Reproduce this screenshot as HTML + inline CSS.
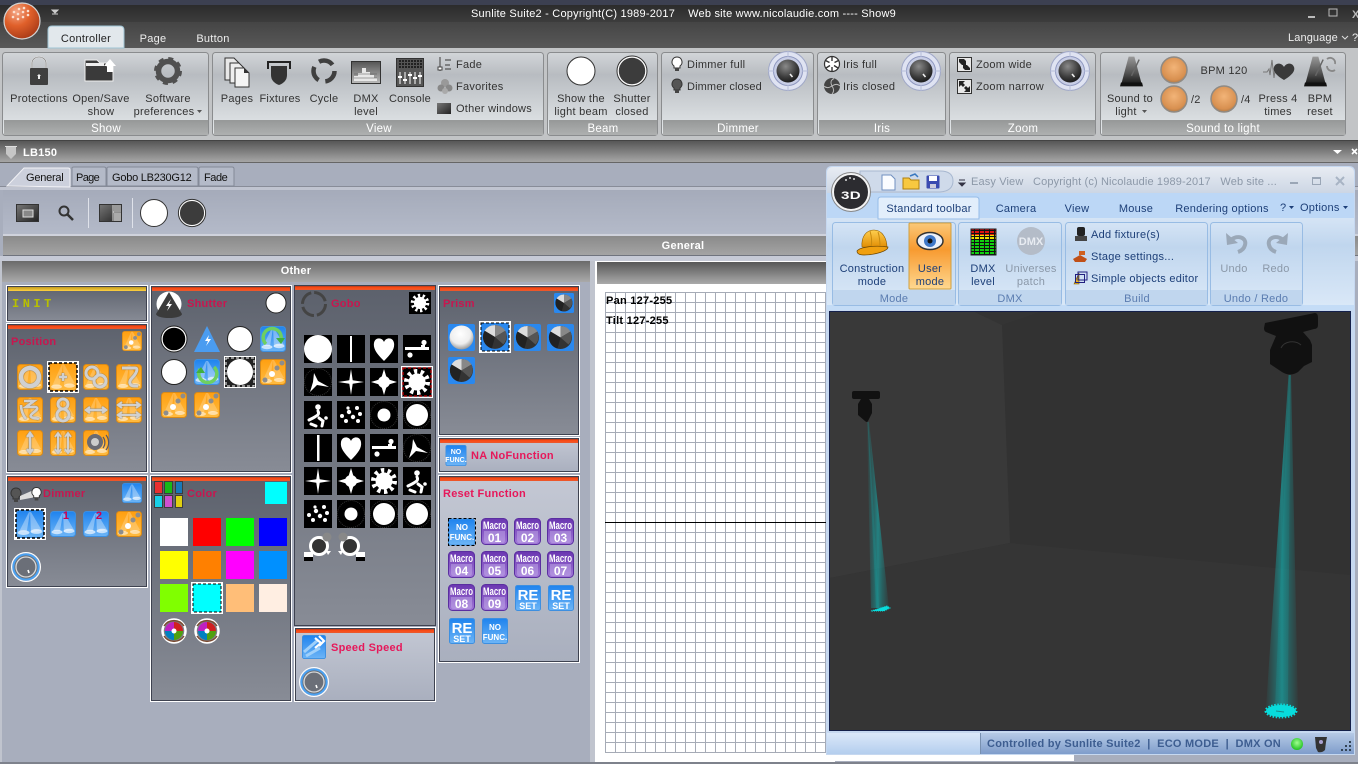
<!DOCTYPE html>
<html><head><meta charset="utf-8"><title>Sunlite Suite2</title>
<style>
html,body{margin:0;padding:0;width:1358px;height:764px;overflow:hidden;background:#a8aebd}
svg{display:block;position:absolute;left:0;top:0}
text{font-family:"Liberation Sans",sans-serif;font-size:11px;letter-spacing:.25px}
.r{fill:#333;text-anchor:middle}.l{fill:#333}
.g{fill:#fff;text-anchor:middle;font-size:11.5px}
.h{fill:#c8164f;font-weight:bold;font-size:11px}
.h2{fill:#e6185a;font-weight:bold;font-size:11px}
.b{fill:#1d3f78;text-anchor:middle}.bl{fill:#1d3f78}
.gr{fill:#8b98a8;text-anchor:middle}
.gl{fill:#5a7cb0;text-anchor:middle}
.bt{fill:#fff;font-weight:bold;text-anchor:middle;font-size:8px;letter-spacing:0}
.mc{fill:#fff;font-weight:bold;text-anchor:middle;font-size:12px;letter-spacing:0}
.o{filter:drop-shadow(0 0 .6px #555)}
</style></head><body>
<svg width="1358" height="764" viewBox="0 0 1358 764" xmlns="http://www.w3.org/2000/svg">
<defs>
<linearGradient id="tb" x1="0" y1="0" x2="0" y2="1"><stop offset="0" stop-color="#2b2b2b"/><stop offset="1" stop-color="#3c3c3c"/></linearGradient>
<linearGradient id="ts" x1="0" y1="0" x2="0" y2="1"><stop offset="0" stop-color="#454545"/><stop offset="1" stop-color="#585858"/></linearGradient>
<linearGradient id="rg" x1="0" y1="0" x2="0" y2="1"><stop offset="0" stop-color="#d2d5d8"/><stop offset=".27" stop-color="#b8bcc1"/><stop offset="1" stop-color="#e6eaec"/></linearGradient>
<linearGradient id="band" x1="0" y1="0" x2="0" y2="1"><stop offset="0" stop-color="#969898"/><stop offset="1" stop-color="#aeb0b0"/></linearGradient>
<linearGradient id="hd" x1="0" y1="0" x2="0" y2="1"><stop offset="0" stop-color="#575757"/><stop offset="1" stop-color="#aaaaaa"/></linearGradient>
<linearGradient id="hd2" x1="0" y1="0" x2="0" y2="1"><stop offset="0" stop-color="#6b6b6b"/><stop offset="1" stop-color="#aaaaaa"/></linearGradient>
<linearGradient id="gb" x1="0" y1="0" x2="0" y2="1"><stop offset="0" stop-color="#8a8a8a"/><stop offset="1" stop-color="#a4a4a4"/></linearGradient>
<linearGradient id="pd" x1="0" y1="0" x2="0" y2="1"><stop offset="0" stop-color="#5c616c"/><stop offset="1" stop-color="#888c96"/></linearGradient>
<linearGradient id="pl" x1="0" y1="0" x2="0" y2="1"><stop offset="0" stop-color="#c4c8d4"/><stop offset="1" stop-color="#a9afbe"/></linearGradient>
<linearGradient id="tool" x1="0" y1="0" x2="0" y2="1"><stop offset="0" stop-color="#a5abba"/><stop offset="1" stop-color="#b4bac9"/></linearGradient>
<linearGradient id="red" x1="0" y1="0" x2="0" y2="1"><stop offset="0" stop-color="#b03a20"/><stop offset=".4" stop-color="#ff4a12"/><stop offset="1" stop-color="#e85a30"/></linearGradient>
<linearGradient id="yel" x1="0" y1="0" x2="0" y2="1"><stop offset="0" stop-color="#c09a20"/><stop offset="1" stop-color="#ffd040"/></linearGradient>
<linearGradient id="og" x1="0" y1="0" x2="0" y2="1"><stop offset="0" stop-color="#ff9f10"/><stop offset="1" stop-color="#ffbb40"/></linearGradient>
<linearGradient id="bg" x1="0" y1="0" x2="0" y2="1"><stop offset="0" stop-color="#1f83ee"/><stop offset="1" stop-color="#6db5f6"/></linearGradient>
<linearGradient id="pg" x1="0" y1="0" x2="0" y2="1"><stop offset="0" stop-color="#6a35b0"/><stop offset="1" stop-color="#a27ad8"/></linearGradient>
<radialGradient id="orb" cx=".35" cy=".25" r=".85"><stop offset="0" stop-color="#f4a888"/><stop offset=".45" stop-color="#e0602a"/><stop offset="1" stop-color="#a03414"/></radialGradient>
<radialGradient id="knob" cx=".4" cy=".3" r=".8"><stop offset="0" stop-color="#8a8a8a"/><stop offset=".6" stop-color="#3a3a3a"/><stop offset="1" stop-color="#111"/></radialGradient>
<radialGradient id="ob" cx=".5" cy=".4" r=".6"><stop offset="0" stop-color="#f2b478"/><stop offset=".8" stop-color="#d89050"/><stop offset="1" stop-color="#b07a48"/></radialGradient>
<radialGradient id="sph" cx=".45" cy=".35" r=".65"><stop offset="0" stop-color="#fff"/><stop offset=".65" stop-color="#eee"/><stop offset="1" stop-color="#999"/></radialGradient>
<radialGradient id="led" cx=".5" cy=".4" r=".6"><stop offset="0" stop-color="#a0ff90"/><stop offset="1" stop-color="#20c020"/></radialGradient>
<linearGradient id="w3" x1="0" y1="0" x2="0" y2="1"><stop offset="0" stop-color="#e8ecf3"/><stop offset="1" stop-color="#ccd6e4"/></linearGradient>
<linearGradient id="rb3" x1="0" y1="0" x2="0" y2="1"><stop offset="0" stop-color="#d5e4f5"/><stop offset=".3" stop-color="#c0d6ee"/><stop offset="1" stop-color="#dbe9f8"/></linearGradient>
<linearGradient id="um" x1="0" y1="0" x2="0" y2="1"><stop offset="0" stop-color="#fbc878"/><stop offset=".4" stop-color="#f79a30"/><stop offset="1" stop-color="#ffd890"/></linearGradient>
<linearGradient id="st1" x1="0" y1="0" x2="0" y2="1"><stop offset="0" stop-color="#dbe8f9"/><stop offset="1" stop-color="#b4ceee"/></linearGradient>
<linearGradient id="st2" x1="0" y1="0" x2="0" y2="1"><stop offset="0" stop-color="#b6cae6"/><stop offset="1" stop-color="#7f9dcb"/></linearGradient>
<linearGradient id="dm" x1="0" y1="0" x2="0" y2="1"><stop offset="0" stop-color="#e01010"/><stop offset=".22" stop-color="#e01010"/><stop offset=".23" stop-color="#f0e000"/><stop offset=".42" stop-color="#f0e000"/><stop offset=".43" stop-color="#10d010"/><stop offset="1" stop-color="#10d010"/></linearGradient>
<linearGradient id="hat" x1="0" y1="0" x2="0" y2="1"><stop offset="0" stop-color="#ffd050"/><stop offset="1" stop-color="#e08a00"/></linearGradient>
<linearGradient id="beam" x1="0" y1="0" x2="1" y2="0"><stop offset="0" stop-color="#16a0a0" stop-opacity=".05"/><stop offset=".3" stop-color="#16a0a0" stop-opacity=".4"/><stop offset=".5" stop-color="#18a8a8" stop-opacity=".65"/><stop offset=".7" stop-color="#16a0a0" stop-opacity=".4"/><stop offset="1" stop-color="#16a0a0" stop-opacity=".05"/></linearGradient>
<linearGradient id="icn" x1="0" y1="0" x2="1" y2="1"><stop offset="0" stop-color="#777"/><stop offset="1" stop-color="#222"/></linearGradient>
<linearGradient id="met" x1="0" y1="0" x2="0" y2="1"><stop offset="0" stop-color="#999"/><stop offset=".55" stop-color="#555"/><stop offset="1" stop-color="#111"/></linearGradient>
<linearGradient id="dmb" x1="0" y1="0" x2="0" y2="1"><stop offset="0" stop-color="#555"/><stop offset="1" stop-color="#bbb"/></linearGradient>
<pattern id="grid" patternUnits="userSpaceOnUse" x="605" y="292" width="10" height="10"><rect width="10" height="10" fill="#fff"/><rect width="10" height="1" fill="#a6abb6"/><rect width="1" height="10" fill="#a6abb6"/></pattern>
<pattern id="dmxp" patternUnits="userSpaceOnUse" width="5" height="3"><rect x="4" width="1" height="3" fill="#111"/><rect y="2" width="5" height="1" fill="#111"/></pattern>
<pattern id="cons" patternUnits="userSpaceOnUse" width="3" height="3"><rect width="3" height="3" fill="#555"/><rect width="2" height="2" fill="#222"/></pattern>

<symbol id="bo" viewBox="0 0 26 26"><rect x=".5" y=".5" width="25" height="25" rx="3" fill="url(#og)" stroke="#d98a18"/><path d="M12 1L3 21h7L13 1zM14 1l10 18-10 2-1-20z" fill="#fff" opacity=".22"/><ellipse cx="7" cy="22" rx="5" ry="2" fill="#fff" opacity=".55"/><ellipse cx="19" cy="21" rx="5" ry="2" fill="#fff" opacity=".55"/></symbol>
<symbol id="bb" viewBox="0 0 26 26"><rect x=".5" y=".5" width="25" height="25" rx="3" fill="url(#bg)" stroke="#3d8fe0"/><path d="M12 2L3 20h7L13 2zM14 2l10 17-10 2-1-19z" fill="#fff" opacity=".35"/><ellipse cx="7" cy="21" rx="5.500" ry="2.200" fill="#fff" opacity=".65"/><ellipse cx="19" cy="20" rx="5.500" ry="2.200" fill="#fff" opacity=".65"/></symbol>
<symbol id="spot" viewBox="0 0 26 26"><g fill="#8d8d8d"><circle cx="22" cy="4" r="2.500"/><circle cx="17" cy="9" r="2.500"/><circle cx="5" cy="21" r="2.500"/></g><circle cx="12" cy="15" r="3" fill="#fff"/></symbol>
<symbol id="cw" viewBox="0 0 26 26"><circle cx="13" cy="13" r="11.500" fill="none" stroke="#fff" stroke-width="2.500"/><path d="M13 4a9 9 0 0 1 9 9h-9z" fill="#d02020"/><path d="M22 13a9 9 0 0 1-9 9v-9z" fill="#50a010"/><path d="M13 22a9 9 0 0 1-9-9h9z" fill="#0080c0"/><path d="M4 13a9 9 0 0 1 9-9v9z" fill="#c020c0"/><circle cx="13" cy="13" r="2.500" fill="#fff"/><path d="M3 8a12 12 0 0 1 20 0M23 18a12 12 0 0 1-20 0" fill="none" stroke="#7a4a30" stroke-width="1.400"/></symbol>
<symbol id="kn" viewBox="0 0 40 40"><circle cx="20" cy="20" r="19.500" fill="#dfe3f2" stroke="#a0a8c8"/><circle cx="20" cy="20" r="14.500" fill="#c8cee6" stroke="#8f98c0"/><path d="M20 0v6M20 34v6M0 20h6M34 20h6" stroke="#b4bcd8"/><circle cx="20" cy="20" r="11.500" fill="url(#knob)"/><path d="M22 23l2.500 3" stroke="#eee" stroke-width="1.600"/></symbol>
<symbol id="kb" viewBox="0 0 30 30"><circle cx="15" cy="15" r="14.500" fill="#c2c8d8" stroke="#fff"/><circle cx="15" cy="15" r="12.600" fill="#6b7078" stroke="#4aa0f0" stroke-width="2"/><circle cx="15" cy="15" r="10" fill="#6b6f78" stroke="#d8d8d8" stroke-width="1.300"/><path d="M17 18l1 3" stroke="#fff" stroke-width="1.600"/></symbol>
<symbol id="bulb" viewBox="0 0 14 16"><path d="M7 1a5 5 0 0 0-3 9v2h6v-2a5 5 0 0 0-3-9z" fill="currentColor" stroke="#333"/><rect x="5" y="12" width="4" height="3" fill="#444"/></symbol>
<symbol id="bur" viewBox="0 0 28 28"><circle cx="14" cy="14" r="8.500" fill="#fff"/><circle cx="14" cy="14" r="10.500" fill="none" stroke="#fff" stroke-width="5" stroke-dasharray="3.200 3.400"/></symbol>
<symbol id="hrt" viewBox="0 0 28 28"><path d="M14 26C7 19 3 14 4 8C5 2 12 2 14 7C16 2 23 2 24 8C25 14 21 19 14 26Z" fill="#fff"/></symbol>
<symbol id="lin" viewBox="0 0 28 28"><rect x="2" y="12" width="24" height="3" fill="#fff"/><circle cx="21" cy="7.500" r="2.600" fill="#fff"/><circle cx="7" cy="20" r="2.600" fill="#fff"/><rect x="18" y="10" width="4" height="3" fill="#fff"/></symbol>
<symbol id="tri" viewBox="0 0 28 28"><circle cx="14" cy="14" r="13.500" fill="none" stroke="#333" stroke-dasharray="1 1"/><path d="M10 5L14 13L25 19L13 17L6 24L9 14Z" fill="#fff"/></symbol>
<symbol id="s4" viewBox="0 0 28 28"><path d="M14 1L15.700 12.300L27 14L15.700 15.700L14 27L12.300 15.700L1 14L12.300 12.300Z" fill="#fff"/></symbol>
<symbol id="s5" viewBox="0 0 28 28"><path d="M14 1L17 11L27 14L17 17L14 27L11 17L1 14L11 11Z" fill="#fff"/><circle cx="14" cy="14" r="6" fill="#fff"/></symbol>
<symbol id="run" viewBox="0 0 28 28"><g fill="none" stroke="#fff" stroke-width="3" stroke-linecap="round"><path d="M14 10C16 14 12 15 9 17M9 17L5 19M15 17L19 20L18 25M7 23L12 25"/></g><circle cx="14" cy="6" r="2.800" fill="#fff"/><circle cx="22" cy="17" r="1.800" fill="#fff"/></symbol>
<symbol id="dts" viewBox="0 0 28 28"><g fill="#fff"><circle cx="5" cy="15" r="2"/><circle cx="12" cy="11" r="2.200"/><circle cx="20" cy="7" r="2"/><circle cx="9" cy="20" r="2"/><circle cx="16" cy="16" r="2.200"/><circle cx="23" cy="13" r="2"/><circle cx="11" cy="7" r="1.600"/><circle cx="21" cy="20" r="2"/></g></symbol>
<symbol id="cs" viewBox="0 0 28 28"><circle cx="14" cy="14" r="13.500" fill="none" stroke="#333" stroke-dasharray="1 1"/><circle cx="14" cy="14" r="6.500" fill="#fff"/></symbol>
<symbol id="cb" viewBox="0 0 28 28"><circle cx="14" cy="14" r="13.500" fill="none" stroke="#333" stroke-dasharray="1 1"/><circle cx="14" cy="14" r="11" fill="#fff"/></symbol>
<symbol id="pb" viewBox="0 0 27 27"><rect width="27" height="27" rx="2" fill="#2a88ee"/><circle cx="13.500" cy="13.500" r="11.500" fill="#333"/><path d="M13.500 2a11.500 11.500 0 0 0-10 5.500l10 6z" fill="#ddd"/><path d="M13.500 2a11.500 11.500 0 0 1 10 5.500l-10 6z" fill="#888"/><path d="M23.500 7.500a11.500 11.500 0 0 1-2 13l-8-7z" fill="#555"/><path d="M13.500 13.500l-3 11a11.500 11.500 0 0 1-7-17z" fill="#222"/></symbol>
<symbol id="mac" viewBox="0 0 27 27"><rect x=".5" y=".5" width="26" height="26" rx="4" fill="url(#pg)" stroke="#5a2ea0"/><path d="M3 13H24V22Q24 25 21 25H6Q3 25 3 22Z" fill="#c8b4ea" opacity=".45"/></symbol>
<symbol id="bbx" viewBox="0 0 26 26"><rect x=".5" y=".5" width="25" height="25" rx="2" fill="url(#bg)" stroke="#3d8fe0"/></symbol>
<symbol id="meta" viewBox="0 0 24 32"><path d="M9 0h6l8 30H1z" fill="url(#met)"/><path d="M1 27h22l1 4H0z" fill="#111"/><path d="M12 20L20 3" stroke="#666" stroke-width="1.500"/></symbol>
</defs>

<rect width="1358" height="764" fill="#a8aebd"/>
<rect width="1358" height="5" fill="#3c4051"/>
<rect y="5" width="1358" height="17" fill="url(#tb)"/>
<rect y="22" width="1358" height="26" fill="url(#ts)"/>
<rect y="48" width="1358" height="92" fill="#c2c4c6"/>
<text x="471" y="17" fill="#fff" font-size="12" textLength="425" lengthAdjust="spacing" xml:space="preserve">Sunlite Suite2 - Copyright(C) 1989-2017    Web site www.nicolaudie.com ---- Show9</text>
<path d="M48 48V30Q48 26 52 26H120Q124 26 124 30V48Z" fill="#e2e8ec" stroke="#9fc4d4"/>
<circle cx="22" cy="21" r="18" fill="url(#orb)" stroke="#d4d4d4" stroke-width="1.200"/>
<g fill="#fbe0d0"><circle cx="14" cy="12" r="1.300"/><circle cx="19" cy="9" r="1.300"/><circle cx="24" cy="8" r="1.300"/><circle cx="13" cy="17" r="1.300"/><circle cx="18" cy="14" r="1.300"/><circle cx="23" cy="12" r="1.300"/><circle cx="28" cy="11" r="1.300"/><circle cx="18" cy="19" r="1.300"/><circle cx="23" cy="17" r="1.300"/><circle cx="28" cy="15" r="1.300"/></g>
<path d="M52 14h6M52 10h6l-3 3z" stroke="#ccc" fill="#ccc"/>
<rect x="1308" y="16" width="7" height="2" fill="#bbb"/><rect x="1329" y="9" width="8" height="7" fill="none" stroke="#bbb"/><text x="1352" y="18" fill="#bbb" font-weight="bold" font-size="12">X</text>
<text x="86" y="42" text-anchor="middle" fill="#222">Controller</text>
<text x="153" y="42" text-anchor="middle" fill="#eee">Page</text>
<text x="213" y="42" text-anchor="middle" fill="#eee">Button</text>
<text x="1288" y="41" fill="#eee" textLength="50">Language</text><path d="M1342 36l3 3 3-3" fill="none" stroke="#ddd"/><text x="1352" y="41" fill="#eee">?</text>
<g stroke="#8a8c8e" fill="url(#rg)">
<rect x="2.500" y="52.500" width="206" height="83" rx="3"/>
<rect x="212.500" y="52.500" width="331" height="83" rx="3"/>
<rect x="547.500" y="52.500" width="110" height="83" rx="3"/>
<rect x="661.500" y="52.500" width="152" height="83" rx="3"/>
<rect x="817.500" y="52.500" width="128" height="83" rx="3"/>
<rect x="949.500" y="52.500" width="146" height="83" rx="3"/>
<rect x="1100.500" y="52.500" width="245" height="83" rx="3"/>
</g>
<g fill="url(#band)">
<rect x="4" y="120" width="204" height="15"/><rect x="214" y="120" width="329" height="15"/><rect x="549" y="120" width="108" height="15"/><rect x="663" y="120" width="150" height="15"/><rect x="819" y="120" width="126" height="15"/><rect x="951" y="120" width="144" height="15"/><rect x="1102" y="120" width="243" height="15"/>
</g>
<text class="g" x="106" y="132">Show</text><text class="g" x="379" y="132">View</text><text class="g" x="603" y="132">Beam</text><text class="g" x="738" y="132">Dimmer</text><text class="g" x="882" y="132">Iris</text><text class="g" x="1023" y="132">Zoom</text><text class="g" x="1223" y="132">Sound to light</text>

<text class="r" x="39" y="102">Protections</text>
<text class="r" x="101" y="102">Open/Save</text><text class="r" x="101" y="115">show</text>
<text class="r" x="168" y="102">Software</text><text class="r" x="164" y="115">preferences</text><path d="M197 110h5l-2.500 3z" fill="#555"/>
<text class="r" x="237" y="102">Pages</text><text class="r" x="280" y="102">Fixtures</text><text class="r" x="324" y="102">Cycle</text>
<text class="r" x="366" y="102">DMX</text><text class="r" x="366" y="115">level</text><text class="r" x="410" y="102">Console</text>
<text class="l" x="456" y="68">Fade</text><text class="l" x="456" y="90">Favorites</text><text class="l" x="456" y="112">Other windows</text>
<text class="r" x="581" y="102">Show the</text><text class="r" x="581" y="115">light beam</text><text class="r" x="632" y="102">Shutter</text><text class="r" x="632" y="115">closed</text>
<text class="l" x="687" y="68">Dimmer full</text><text class="l" x="687" y="90" textLength="75">Dimmer closed</text>
<text class="l" x="843" y="68">Iris full</text><text class="l" x="843" y="90">Iris closed</text>
<text class="l" x="976" y="68">Zoom wide</text><text class="l" x="976" y="90" textLength="68">Zoom narrow</text>
<text class="r" x="1130" y="102">Sound to</text><text class="r" x="1126" y="115">light</text><path d="M1142 110h5l-2.500 3z" fill="#555"/>
<text class="r" x="1224" y="74">BPM 120</text><text class="l" x="1191" y="103">/2</text><text class="l" x="1241" y="103">/4</text>
<text class="r" x="1278" y="102">Press 4</text><text class="r" x="1278" y="115">times</text><text class="r" x="1320" y="102">BPM</text><text class="r" x="1320" y="115">reset</text>

<path d="M32 68V63a7 6 0 0 1 14 0V68" fill="none" stroke="#ddd" stroke-width="1.800"/><path d="M32 68V63a7 6 0 0 1 14 0V68" fill="none" stroke="#777" stroke-width=".6"/>
<rect x="30" y="68" width="18" height="17" rx="1" fill="#3f3f3f"/><path d="M39 74l2 2h-1v3h-2v-3h-1z" fill="#eee"/>
<path d="M85 60h12l3 3h7v3h6v15H85z" fill="#3a3a3a" stroke="#eee"/><path d="M110 59l6 7h-3v6h-6v-6h-3z" fill="#fff"/><rect x="86" y="63" width="18" height="3" fill="#eee"/>
<circle cx="168" cy="71" r="9.500" fill="none" stroke="#505050" stroke-width="5.500"/><circle cx="168" cy="71" r="12.500" fill="none" stroke="#505050" stroke-width="3" stroke-dasharray="5 4.800"/>
<path d="M225 58h9l5 5v17h-14z" fill="#e8e8e8" stroke="#333"/><path d="M230 63h9l5 5v15h-14z" fill="#eee" stroke="#333"/><path d="M235 68h9l5 5v14h-14z" fill="#f4f4f4" stroke="#333"/><path d="M244 68v5h5z" fill="#333"/>
<path d="M267 61h24v8h-2v-6h-20v6h-2z" fill="#222"/><path d="M271 66h16v9q0 7-8 10q-8-3-8-10z" fill="#333"/>
<circle cx="324" cy="71" r="10.500" fill="none" stroke="#3f3f3f" stroke-width="4.500" stroke-dasharray="15 7"/>
<rect x="351.500" y="61.500" width="29" height="22" fill="url(#dmb)" stroke="#333"/><path d="M354 81v-5h4v-3h4v-5h4v4h4v3h4v3h3v3z" fill="#e8e8e8"/><path d="M354 74h23M354 78h23" stroke="#555" stroke-width=".6"/>
<rect x="396.500" y="58.500" width="27" height="28" fill="#555" stroke="#333"/><rect x="398" y="60" width="24" height="9" fill="url(#cons)"/><path d="M400 72v12M405 72v12M410 72v12M415 72v12M420 72v12" stroke="#fff" stroke-width="1"/><path d="M398 77h4M403 80h4M408 75h4M413 78h4M418 76h4" stroke="#fff" stroke-width="2"/>
<path d="M440 57v14M445 60h6M445 65h5M445 69h6" stroke="#555" stroke-width="1.200" fill="none"/><rect x="438" y="67" width="4" height="3" fill="#fff" stroke="#444"/>
<circle cx="445" cy="83" r="4" fill="#999"/><circle cx="441" cy="88" r="3.500" fill="#888"/><circle cx="449" cy="88" r="3.500" fill="#888"/><circle cx="445" cy="91" r="3" fill="#aaa"/>
<rect x="437" y="103" width="14" height="11" fill="url(#icn)"/>
<circle cx="581" cy="71" r="14" fill="#fff" stroke="#333"/>
<circle cx="632" cy="71" r="14" fill="#3c3c3c" stroke="#fff" stroke-width="1.600"/><circle cx="632" cy="71" r="15" fill="none" stroke="#333"/>
<use href="#bulb" x="670" y="56" width="14" height="16" color="#fff"/><use href="#bulb" x="670" y="78" width="14" height="16" color="#555"/>
<use href="#kn" x="768" y="51" width="40" height="40"/><use href="#kn" x="901" y="51" width="40" height="40"/><use href="#kn" x="1050" y="51" width="40" height="40"/>
<circle cx="832" cy="64" r="7.500" fill="#fff" stroke="#333" stroke-width="1.200"/><path d="M832 57v4M838.500 60.500l-4 2M838 68l-4-2.500M832 71v-4M826 68l4-2.500M825.500 60.500l4 2" stroke="#333" stroke-width="1.400"/>
<circle cx="832" cy="86" r="8" fill="#444"/><path d="M832 86C830 82 831 80 834 78.500M832 86C835 84 838 84 840 86M832 86C834 89 834 92 832 94M832 86C829 88 826 88 824 86" fill="none" stroke="#bbb"/>
<rect x="957.500" y="57.500" width="14" height="14" fill="#e8e8e8" stroke="#333"/><path d="M959 59h5l2 2v4h-4l-3-3zM970 70h-5l-2-2v-3h4l3 3z" fill="#222"/>
<rect x="957.500" y="79.500" width="14" height="14" fill="#e8e8e8" stroke="#333"/><path d="M959 81h6l-2 2 2 2-2 2-2-2-2 2zM970 92h-6l2-2-2-2 2-2 2 2 2-2z" fill="#222"/>
<use href="#meta" x="1120" y="56" width="23" height="32"/>
<circle cx="1174" cy="70" r="13" fill="url(#ob)" stroke="#8f8a84" stroke-width="1.500"/><circle cx="1174" cy="99" r="13" fill="url(#ob)" stroke="#8f8a84" stroke-width="1.500"/><circle cx="1224" cy="99" r="13" fill="url(#ob)" stroke="#8f8a84" stroke-width="1.500"/>
<path d="M1263 72h4l2-3 1 6 2-15 2 18 1-8h3" fill="none" stroke="#777"/><path d="M1284 80C1274 74 1273 70 1274 67C1276 62 1282 63 1284 67C1286 63 1292 62 1294 67C1295 70 1294 74 1284 80Z" fill="#3a3a3a"/>
<use href="#meta" x="1304" y="56" width="23" height="32"/><path d="M1327 59a5 5 0 0 1 8 5M1335 70a5 5 0 0 1-8-4" fill="none" stroke="#888" stroke-width="1.800"/>

<rect y="140" width="1358" height="1" fill="#444"/>
<rect y="141" width="1358" height="22" fill="url(#hd)"/>
<rect y="162" width="1358" height="1" fill="#666"/>
<path d="M6 146h10v8l-5 5-5-5z" fill="#c6c6c6"/><rect x="5" y="146" width="12" height="1" fill="#ddd"/>
<text x="23" y="156" fill="#fff" font-weight="bold" font-size="11">LB150</text>
<path d="M1333 150h9l-4.500 4z" fill="#fff"/><path d="M1352 149l5 5M1357 149l-5 5" stroke="#fff" stroke-width="1.600"/>

<rect y="186" width="1358" height="1" fill="#888c98"/>
<rect x="0" y="187" width="1358" height="3" fill="#c0c4d0"/>
<path d="M72 186V168q0-1 2-1H104q2 0 2 2V186z" fill="#b4bac8" stroke="#848a98"/>
<path d="M107 186V168q0-1 2-1H196q2 0 2 2V186z" fill="#b4bac8" stroke="#848a98"/>
<path d="M199 186V168q0-1 2-1H232q2 0 2 2V186z" fill="#b4bac8" stroke="#848a98"/>
<path d="M7 186L24 168H68q2 0 2 2V187z" fill="#ccd0dc" stroke="#f2f2f6"/>
<text x="26" y="181" fill="#111" textLength="38">General</text><text x="76" y="181" fill="#111" textLength="24">Page</text><text x="112" y="181" fill="#111" textLength="80">Gobo LB230G12</text><text x="204" y="181" fill="#111" textLength="24">Fade</text>

<rect x="3" y="190" width="1360" height="45" fill="url(#tool)"/><rect x="3" y="234" width="1360" height="2" fill="#cfd2dc"/>
<rect x="3" y="236" width="1360" height="19" fill="url(#gb)"/><rect x="3" y="255" width="1360" height="1" fill="#70747e"/>
<rect x="0" y="256" width="1358" height="5" fill="#c6cad6"/>
<rect x="16.500" y="204.500" width="22" height="17" fill="url(#icn)" stroke="#333"/><rect x="23" y="210" width="10" height="7" fill="#888" stroke="#ddd"/>
<circle cx="64" cy="211" r="4.500" fill="none" stroke="#333" stroke-width="2"/><path d="M67 214l6 6" stroke="#333" stroke-width="2.500"/>
<rect x="88" y="198" width="1" height="30" fill="#dfe2ea"/>
<rect x="99.500" y="204.500" width="22" height="17" fill="url(#icn)" stroke="#333"/><path d="M113 205v16M113 212h8" stroke="#ddd" fill="none"/><rect x="114" y="205" width="7" height="7" fill="#999"/><rect x="114" y="213" width="7" height="8" fill="#aaa"/>
<rect x="132" y="198" width="1" height="30" fill="#dfe2ea"/>
<circle cx="154" cy="213" r="13.500" fill="#fff" stroke="#333"/>
<circle cx="192" cy="213" r="12.800" fill="#3c3c3c" stroke="#fff" stroke-width="1.500"/><circle cx="192" cy="213" r="13.600" fill="none" stroke="#333"/>
<text x="683" y="249" fill="#fff" font-weight="bold" text-anchor="middle">General</text>

<rect x="2" y="261" width="588" height="21" fill="url(#hd2)"/>
<text x="296" y="274" fill="#fff" font-weight="bold" text-anchor="middle">Other</text>
<rect x="590" y="261" width="5" height="503" fill="#c0c4ce"/>
<rect x="0" y="261" width="2" height="503" fill="#c0c4ce"/>
<rect x="2" y="282" width="588" height="480" fill="#a8aebd"/>
<rect y="762" width="1358" height="2" fill="#7e828c"/>

<g stroke="#fff">
<rect x="6.500" y="285.500" width="141" height="36" fill="url(#pd)"/>
<rect x="6.500" y="323.500" width="141" height="149" fill="url(#pd)"/>
<rect x="150.500" y="285.500" width="141" height="187" fill="url(#pd)"/>
<rect x="6.500" y="475.500" width="141" height="112" fill="url(#pd)"/>
<rect x="150.500" y="475.500" width="141" height="226" fill="url(#pd)"/>
<rect x="294.500" y="285.500" width="141" height="340" fill="url(#pd)" stroke="#3e4250"/>
<rect x="294.500" y="627.500" width="141" height="74" fill="url(#pl)"/>
<rect x="438.500" y="285.500" width="141" height="150" fill="url(#pd)"/>
<rect x="438.500" y="437.500" width="141" height="35" fill="url(#pl)"/>
<rect x="438.500" y="475.500" width="141" height="187" fill="url(#pl)"/>
</g>
<g stroke="#3e4250" fill="none">
<rect x="7.500" y="286.500" width="139" height="34"/>
<rect x="7.500" y="324.500" width="139" height="147"/>
<rect x="151.500" y="286.500" width="139" height="185"/>
<rect x="7.500" y="476.500" width="139" height="110"/>
<rect x="151.500" y="476.500" width="139" height="224"/>
<rect x="295.500" y="628.500" width="139" height="72"/>
<rect x="439.500" y="286.500" width="139" height="148"/>
<rect x="439.500" y="438.500" width="139" height="33"/>
<rect x="439.500" y="476.500" width="139" height="185"/>
</g>
<g fill="url(#red)">
<rect x="8" y="325" width="138" height="4"/><rect x="152" y="287" width="138" height="4"/><rect x="8" y="477" width="138" height="4"/><rect x="152" y="477" width="138" height="4"/><rect x="295" y="286" width="140" height="4"/><rect x="296" y="629" width="138" height="4"/><rect x="440" y="287" width="138" height="4"/><rect x="440" y="439" width="138" height="4"/><rect x="440" y="477" width="138" height="4"/>
</g>
<rect x="8" y="287" width="138" height="4" fill="url(#yel)"/>

<text x="12" y="307" fill="#b8c000" font-weight="bold" style="letter-spacing:3.500px;font-size:12px;font-family:'Liberation Mono',monospace">INIT</text>
<text class="h" x="11" y="345">Position</text><text class="h" x="187" y="307">Shutter</text><text class="h" x="43" y="497">Dimmer</text><text class="h" x="187" y="497">Color</text><text class="h" x="331" y="307">Gobo</text><text class="h" x="443" y="307">Prism</text>
<text class="h2" x="471" y="459">NA NoFunction</text><text class="h2" x="443" y="497">Reset Function</text><text class="h2" x="331" y="651">Speed Speed</text>

<use href="#bo" x="122" y="331" width="20" height="20"/><use href="#spot" x="122" y="331" width="20" height="20"/>
<use href="#bo" x="17" y="364" width="26" height="26"/>
<rect x="47.500" y="361.500" width="31" height="31" fill="#fff" stroke="#fff"/><use href="#bo" x="49" y="363" width="28" height="28"/><rect x="49" y="363" width="28" height="28" fill="none" stroke="#000" stroke-width="1.500" stroke-dasharray="3 2"/>
<use href="#bo" x="83" y="364" width="26" height="26"/><use href="#bo" x="116" y="364" width="26" height="26"/>
<use href="#bo" x="17" y="397" width="26" height="26"/><use href="#bo" x="50" y="397" width="26" height="26"/><use href="#bo" x="83" y="397" width="26" height="26"/><use href="#bo" x="116" y="397" width="26" height="26"/>
<use href="#bo" x="17" y="430" width="26" height="26"/><use href="#bo" x="50" y="430" width="26" height="26"/><use href="#bo" x="83" y="430" width="26" height="26"/>
<g class="o" fill="none" stroke="#d0d0d0">
<circle cx="30" cy="377" r="9" stroke-width="4.500"/>
<path d="M63 373v8M59 377h8" stroke-width="2.500"/>
<circle cx="92" cy="373" r="6" stroke-width="3"/><circle cx="100" cy="381" r="6" stroke-width="3"/>
<path d="M122 368h13c4 0 1 6-3 10s-2 8 2 8h4" stroke-width="3"/>
<path d="M24 401h10l-8 6h10c4 2-3 5-5 8s5 3 8 4M21 405c0 5 1 9 5 14" stroke-width="2.600"/>
<circle cx="63" cy="404" r="5" stroke-width="3"/><circle cx="63" cy="415" r="6" stroke-width="3"/>
<path d="M86 410h20M90 407l-4 3 4 3M102 407l4 3-4 3" stroke-width="2.400"/>
<path d="M118 405h22M118 415h22M122 402l-4 3 4 3M136 412l4 3-4 3M136 402l4 3-4 3M122 412l-4 3 4 3" stroke-width="2.200"/>
<path d="M30 433v20M27 437l3-4 3 4M27 449l3 4 3-4" stroke-width="2.400"/>
<path d="M58 433v20M68 433v20M55 437l3-4 3 4M55 449l3 4 3-4M65 437l3-4 3 4M65 449l3 4 3-4" stroke-width="2"/>
</g>
<circle cx="95" cy="442" r="8" fill="#6a6a72"/><circle cx="95" cy="442" r="4" fill="#ccc"/><path d="M103 437a9 9 0 0 1 0 11M106 435a12 12 0 0 1 0 15" fill="none" stroke="#556" stroke-width="1.200"/>

<circle cx="169" cy="304" r="12.500" fill="#fff"/><path d="M169 292l13 22a13 4 0 0 1-26 0z" fill="#3b3b3b"/><path d="M171 299l-5 7h3l-2 5 5-7h-3z" fill="#fff"/>
<circle cx="276" cy="303" r="10" fill="#fff" stroke="#222"/>
<circle cx="174" cy="339" r="12" fill="#000" stroke="#fff" stroke-width="1.400"/><circle cx="174" cy="339" r="13" fill="none" stroke="#222"/>
<path d="M207 326l13 26h-26z" fill="#4a9cf0"/><path d="M209 335l-4 6h3l-2 5 5-7h-3z" fill="#fff"/>
<circle cx="240" cy="339" r="12.500" fill="#fff" stroke="#222"/>
<use href="#bb" x="260" y="326" width="26" height="26"/><path d="M266 344a9 9 0 1 1 14-2" fill="none" stroke="#6ecf60" stroke-width="3.500"/><path d="M276 338h9l-4 6z" fill="#40b040"/>
<circle cx="174" cy="372" r="12.500" fill="#fff" stroke="#222"/>
<use href="#bb" x="194" y="359" width="26" height="26"/><path d="M214 367a9 9 0 1 1-14 2" fill="none" stroke="#6ecf60" stroke-width="3.500"/><path d="M196 373h9l-4-6z" fill="#40b040"/>
<rect x="224.500" y="356.500" width="31" height="31" fill="#222" stroke="#fff"/><rect x="226" y="358" width="28" height="28" fill="none" stroke="#fff" stroke-dasharray="3 2"/><circle cx="240" cy="372" r="13" fill="#fff"/>
<use href="#bo" x="260" y="359" width="26" height="26"/><use href="#spot" x="260" y="359" width="26" height="26"/>
<use href="#bo" x="161" y="392" width="26" height="26"/><use href="#spot" x="161" y="392" width="26" height="26"/>
<use href="#bo" x="194" y="392" width="26" height="26"/><use href="#spot" x="194" y="392" width="26" height="26"/>

<use href="#bulb" x="9" y="487" width="14" height="16" color="#555"/><path d="M20 496L36 489V497L20 500z" fill="#ddd"/><use href="#bulb" x="30" y="486" width="13" height="16" color="#fff"/>
<use href="#bb" x="122" y="483" width="20" height="20"/>
<rect x="14.500" y="508.500" width="31" height="31" fill="#fff" stroke="#fff"/><use href="#bb" x="16" y="510" width="28" height="28"/><rect x="16" y="510" width="28" height="28" fill="none" stroke="#000" stroke-width="1.500" stroke-dasharray="3 2"/>
<use href="#bb" x="50" y="511" width="26" height="26"/><text x="66" y="519" fill="#d00050" font-size="9" font-weight="bold" text-anchor="middle">1</text>
<use href="#bb" x="83" y="511" width="26" height="26"/><text x="99" y="519" fill="#d00050" font-size="9" font-weight="bold" text-anchor="middle">2</text>
<use href="#bo" x="116" y="511" width="26" height="26"/><use href="#spot" x="116" y="511" width="26" height="26"/>
<use href="#kb" x="11" y="552" width="30" height="30"/>

<g stroke="#3c3c3c"><rect x="154.500" y="481.500" width="8" height="12" fill="#e83030"/><rect x="164.500" y="481.500" width="8" height="12" fill="#18b818"/><rect x="175.500" y="481.500" width="7" height="12" fill="#1878b8"/><rect x="154.500" y="495.500" width="8" height="12" fill="#18d0e8"/><rect x="164.500" y="495.500" width="8" height="12" fill="#d050d0"/><rect x="175.500" y="495.500" width="7" height="12" fill="#e0d010"/></g>
<rect x="265" y="482" width="22" height="22" fill="#0ff"/>
<rect x="160" y="518" width="28" height="28" fill="#fff"/><rect x="193" y="518" width="28" height="28" fill="#f00"/><rect x="226" y="518" width="28" height="28" fill="#0f0"/><rect x="259" y="518" width="28" height="28" fill="#00f"/>
<rect x="160" y="551" width="28" height="28" fill="#ff0"/><rect x="193" y="551" width="28" height="28" fill="#ff8000"/><rect x="226" y="551" width="28" height="28" fill="#f0f"/><rect x="259" y="551" width="28" height="28" fill="#0090ff"/>
<rect x="160" y="584" width="28" height="28" fill="#80ff00"/><rect x="191.500" y="582.500" width="31" height="31" fill="#fff" stroke="#fff"/><rect x="193" y="584" width="28" height="28" fill="#0ff" stroke="#000" stroke-dasharray="3 2"/><rect x="226" y="584" width="28" height="28" fill="#ffbe78"/><rect x="259" y="584" width="28" height="28" fill="#ffeee2"/>
<use href="#cw" x="161" y="618" width="26" height="26"/><use href="#cw" x="194" y="618" width="26" height="26"/>

<circle cx="314" cy="304" r="11.500" fill="none" stroke="#444" stroke-width="3" stroke-dasharray="15 3"/>
<rect x="409" y="292" width="22" height="22" fill="#000"/><use href="#bur" x="410" y="293" width="20" height="20"/>
<g fill="#000">
<rect x="304" y="335" width="28" height="28"/><rect x="337" y="335" width="28" height="28"/><rect x="370" y="335" width="28" height="28"/><rect x="403" y="335" width="28" height="28"/>
<rect x="304" y="368" width="28" height="28"/><rect x="337" y="368" width="28" height="28"/><rect x="370" y="368" width="28" height="28"/><rect x="403" y="368" width="28" height="28"/>
<rect x="304" y="401" width="28" height="28"/><rect x="337" y="401" width="28" height="28"/><rect x="370" y="401" width="28" height="28"/><rect x="403" y="401" width="28" height="28"/>
<rect x="304" y="434" width="28" height="28"/><rect x="337" y="434" width="28" height="28"/><rect x="370" y="434" width="28" height="28"/><rect x="403" y="434" width="28" height="28"/>
<rect x="304" y="467" width="28" height="28"/><rect x="337" y="467" width="28" height="28"/><rect x="370" y="467" width="28" height="28"/><rect x="403" y="467" width="28" height="28"/>
<rect x="304" y="500" width="28" height="28"/><rect x="337" y="500" width="28" height="28"/><rect x="370" y="500" width="28" height="28"/><rect x="403" y="500" width="28" height="28"/>
</g>
<circle cx="318" cy="349" r="14" fill="#fff"/><rect x="350" y="336" width="2" height="26" fill="#fff"/><use href="#hrt" x="370" y="335" width="28" height="28"/><use href="#lin" x="403" y="335" width="28" height="28"/>
<use href="#tri" x="304" y="368" width="28" height="28"/><use href="#s4" x="337" y="368" width="28" height="28"/><use href="#s5" x="370" y="368" width="28" height="28"/>
<rect x="401.500" y="366.500" width="31" height="31" fill="none" stroke="#fff"/><rect x="403" y="368" width="28" height="28" fill="none" stroke="#e00" stroke-dasharray="3 2"/><use href="#bur" x="403" y="368" width="28" height="28"/>
<use href="#run" x="304" y="401" width="28" height="28"/><use href="#dts" x="337" y="401" width="28" height="28"/><use href="#cs" x="370" y="401" width="28" height="28"/><use href="#cb" x="403" y="401" width="28" height="28"/>
<rect x="317" y="435" width="2.500" height="26" fill="#fff"/><use href="#hrt" x="337" y="434" width="28" height="28"/><use href="#lin" x="370" y="434" width="28" height="28"/><use href="#tri" x="403" y="434" width="28" height="28"/>
<use href="#s4" x="304" y="467" width="28" height="28"/><use href="#s5" x="337" y="467" width="28" height="28"/><use href="#bur" x="370" y="467" width="28" height="28"/><use href="#run" x="403" y="467" width="28" height="28"/>
<use href="#dts" x="304" y="500" width="28" height="28"/><use href="#cs" x="337" y="500" width="28" height="28"/><use href="#cb" x="370" y="500" width="28" height="28"/><use href="#cb" x="403" y="500" width="28" height="28"/>
<circle cx="319" cy="546" r="8.500" fill="#333" stroke="#fff" stroke-width="3"/><circle cx="350" cy="546" r="8.500" fill="#333" stroke="#fff" stroke-width="3"/>
<path d="M326 551l5 0-3 4zM343 551l-5 0 3 4z" fill="#fff"/>
<rect x="304" y="552" width="9" height="5" fill="#fff"/><rect x="304" y="557" width="9" height="4" fill="#000"/><rect x="356" y="552" width="9" height="5" fill="#fff"/><rect x="356" y="557" width="9" height="4" fill="#000"/>
<circle cx="327" cy="537" r="4.500" fill="#888"/><circle cx="343" cy="537" r="4.500" fill="#888"/>

<use href="#bbx" x="302" y="635" width="24" height="24"/><path d="M304 652L318 640M306 656L320 648" stroke="#9fd0fa" stroke-width="3"/><path d="M315 638l6 5-6 5M319 636l5 5-5 5" fill="none" stroke="#fff" stroke-width="2.200"/>
<use href="#kb" x="299" y="667" width="30" height="30"/>

<use href="#pb" x="554" y="293" width="20" height="20"/>
<rect x="448" y="324" width="27" height="27" rx="2" fill="#2a88ee"/><circle cx="461.500" cy="337.500" r="12" fill="url(#sph)"/>
<rect x="479.500" y="321.500" width="31" height="31" fill="#fff" stroke="#fff"/><use href="#pb" x="481" y="323" width="28" height="28"/><rect x="481" y="323" width="28" height="28" fill="none" stroke="#000" stroke-dasharray="3 2"/>
<use href="#pb" x="514" y="324" width="27" height="27"/><use href="#pb" x="547" y="324" width="27" height="27"/><use href="#pb" x="448" y="357" width="27" height="27"/>
<use href="#bbx" x="445" y="445" width="22" height="21"/><text class="bt" x="456" y="454" style="font-size:7px">NO</text><text class="bt" x="456" y="462" style="font-size:7px">FUNC.</text>
<use href="#bbx" x="448" y="518" width="27" height="28"/><rect x="448.500" y="518.500" width="27" height="27" fill="none" stroke="#000" stroke-dasharray="3 2"/><text class="bt" x="462" y="530">NO</text><text class="bt" x="462" y="540">FUNC.</text>
<g>
<use href="#mac" x="481" y="518" width="27" height="27"/><text class="bt" x="494.500" y="529" style="font-size:11px" textLength="23" lengthAdjust="spacingAndGlyphs">Macro</text><text class="mc" x="494.500" y="542">01</text>
<use href="#mac" x="514" y="518" width="27" height="27"/><text class="bt" x="527.500" y="529" style="font-size:11px" textLength="23" lengthAdjust="spacingAndGlyphs">Macro</text><text class="mc" x="527.500" y="542">02</text>
<use href="#mac" x="547" y="518" width="27" height="27"/><text class="bt" x="560.500" y="529" style="font-size:11px" textLength="23" lengthAdjust="spacingAndGlyphs">Macro</text><text class="mc" x="560.500" y="542">03</text>
<use href="#mac" x="448" y="551" width="27" height="27"/><text class="bt" x="461.500" y="562" style="font-size:11px" textLength="23" lengthAdjust="spacingAndGlyphs">Macro</text><text class="mc" x="461.500" y="575">04</text>
<use href="#mac" x="481" y="551" width="27" height="27"/><text class="bt" x="494.500" y="562" style="font-size:11px" textLength="23" lengthAdjust="spacingAndGlyphs">Macro</text><text class="mc" x="494.500" y="575">05</text>
<use href="#mac" x="514" y="551" width="27" height="27"/><text class="bt" x="527.500" y="562" style="font-size:11px" textLength="23" lengthAdjust="spacingAndGlyphs">Macro</text><text class="mc" x="527.500" y="575">06</text>
<use href="#mac" x="547" y="551" width="27" height="27"/><text class="bt" x="560.500" y="562" style="font-size:11px" textLength="23" lengthAdjust="spacingAndGlyphs">Macro</text><text class="mc" x="560.500" y="575">07</text>
<use href="#mac" x="448" y="584" width="27" height="27"/><text class="bt" x="461.500" y="595" style="font-size:11px" textLength="23" lengthAdjust="spacingAndGlyphs">Macro</text><text class="mc" x="461.500" y="608">08</text>
<use href="#mac" x="481" y="584" width="27" height="27"/><text class="bt" x="494.500" y="595" style="font-size:11px" textLength="23" lengthAdjust="spacingAndGlyphs">Macro</text><text class="mc" x="494.500" y="608">09</text>
<use href="#bbx" x="515" y="585" width="26" height="26"/><text class="mc" x="528" y="600" style="font-size:15px">RE</text><text class="bt" x="528" y="609" style="font-size:9px">SET</text>
<use href="#bbx" x="548" y="585" width="26" height="26"/><text class="mc" x="561" y="600" style="font-size:15px">RE</text><text class="bt" x="561" y="609" style="font-size:9px">SET</text>
<use href="#bbx" x="449" y="618" width="26" height="26"/><text class="mc" x="462" y="633" style="font-size:15px">RE</text><text class="bt" x="462" y="642" style="font-size:9px">SET</text>
<use href="#bbx" x="482" y="618" width="26" height="26"/><text class="bt" x="495" y="630">NO</text><text class="bt" x="495" y="640">FUNC.</text>
</g>

<rect x="595" y="261" width="240" height="501" fill="#fff"/>
<rect x="597" y="262" width="238" height="22" fill="url(#hd)"/>
<rect x="605" y="292" width="225" height="461" fill="url(#grid)"/>
<rect x="605" y="522" width="225" height="1" fill="#000"/>
<text x="606" y="304" fill="#000" font-weight="bold" font-size="11">Pan 127-255</text>
<text x="606" y="324" fill="#000" font-weight="bold" font-size="11">Tilt 127-255</text>
<rect x="826" y="755" width="248" height="6" fill="#fff"/>

<path d="M826 172q0-6 6-6H1349q6 0 6 6V755H826z" fill="#c6d8f0"/>
<path d="M827 173q0-6 6-6H1348q6 0 6 6V193H827z" fill="url(#w3)"/>
<rect x="827" y="193" width="527" height="26" fill="#bcd7f6"/>
<rect x="827" y="218" width="527" height="91" fill="url(#rb3)"/>
<rect x="827" y="305" width="527" height="5" fill="#c4dcf6"/>
<path d="M860 171H940q13 0 13 10t-13 11H860z" fill="#cfdaea" stroke="#a8b8d0"/>
<circle cx="851" cy="192" r="18" fill="#2c2c30" stroke="#f4f4f4" stroke-width="2"/><circle cx="851" cy="192" r="19.500" fill="none" stroke="#888"/>
<text x="841" y="199" fill="#fff" font-weight="bold" font-size="18" textLength="20" lengthAdjust="spacingAndGlyphs">3D</text>
<g fill="#ddd"><circle cx="846" cy="180" r="1"/><circle cx="850" cy="178" r="1"/><circle cx="854" cy="179" r="1"/></g>
<path d="M882 175h9l4 4v11h-13z" fill="#fafcff" stroke="#7090c0"/>
<path d="M903 178h6l2 2h8v9h-16z" fill="#f8c840" stroke="#b08010"/><path d="M910 176l5-2 3 3" fill="none" stroke="#3878c0" stroke-width="1.500"/>
<rect x="926.500" y="175.500" width="13" height="13" rx="1" fill="#3a4ab0"/><rect x="929" y="176" width="8" height="5" fill="#fff"/><rect x="930" y="184" width="6" height="4" fill="#ccd"/>
<path d="M959 180h6M959 183h6l-3 3z" fill="#334" stroke="#334"/>
<text x="971" y="185" fill="#8c98a8" textLength="306" lengthAdjust="spacing" xml:space="preserve">Easy View   Copyright (c) Nicolaudie 1989-2017   Web site ...</text>
<rect x="1290" y="182" width="8" height="2" fill="#9aa6b6"/><rect x="1312.500" y="177.500" width="8" height="7" fill="none" stroke="#9aa6b6"/><rect x="1312" y="177" width="9" height="2" fill="#9aa6b6"/><path d="M1336 177l8 8M1344 177l-8 8" stroke="#a8b4c4" stroke-width="2"/>
<path d="M878 219V200q0-3 3-3H976q3 0 3 3V219z" fill="#e2eefb" stroke="#96bce8"/>
<text class="b" x="929" y="212">Standard toolbar</text><text class="b" x="1016" y="212">Camera</text><text class="b" x="1077" y="212">View</text><text class="b" x="1136" y="212">Mouse</text><text class="b" x="1222" y="212">Rendering options</text>
<text class="bl" x="1280" y="211">?</text><path d="M1289 206h5l-2.500 3z" fill="#1d3f78"/><text class="bl" x="1300" y="211">Options</text><path d="M1343 206h5l-2.500 3z" fill="#1d3f78"/>
<g fill="url(#rb3)" stroke="#98bce4">
<rect x="832.500" y="222.500" width="123" height="83" rx="3"/><rect x="958.500" y="222.500" width="103" height="83" rx="3"/><rect x="1065.500" y="222.500" width="142" height="83" rx="3"/><rect x="1210.500" y="222.500" width="92" height="83" rx="3"/>
</g>
<g fill="#c0d6ee"><rect x="833" y="290" width="122" height="15"/><rect x="959" y="290" width="102" height="15"/><rect x="1066" y="290" width="141" height="15"/><rect x="1211" y="290" width="91" height="15"/></g>
<text class="gl" x="894" y="302">Mode</text><text class="gl" x="1010" y="302">DMX</text><text class="gl" x="1137" y="302">Build</text><text class="gl" x="1256" y="302">Undo / Redo</text>
<path d="M862 247C861 237 866 230 874 230C882 230 887 238 887 248Z" fill="url(#hat)" stroke="#8a5a00" stroke-width=".6"/>
<path d="M870 231C872 238 872 243 871 247M878 232C880 238 880 243 880 247" stroke="#c88a10" fill="none"/>
<path d="M857 251C860 247 875 245 888 247C888 251 875 255 864 255C860 255 857 254 857 251Z" fill="#f0a010" stroke="#6a4400" stroke-width=".7"/>
<rect x="909" y="223" width="42" height="66" rx="1" fill="url(#um)" stroke="#d0a040"/>
<ellipse cx="930" cy="241" rx="13" ry="8.500" fill="#eef2fa" stroke="#333" stroke-width="1.500"/><circle cx="930" cy="241" r="6" fill="#3f78c8"/><circle cx="930" cy="241" r="2.500" fill="#111"/>
<text class="b" x="872" y="272">Construction</text><text class="b" x="872" y="285">mode</text><text class="b" x="930" y="272">User</text><text class="b" x="930" y="285">mode</text>
<rect x="971" y="229" width="25" height="26" fill="url(#dm)"/><rect x="971" y="229" width="25" height="26" fill="url(#dmxp)"/><rect x="971" y="229" width="25" height="26" fill="none" stroke="#222"/>
<circle cx="1031" cy="241" r="14" fill="#b4bcc8"/><text x="1031" y="245" fill="#e8ecf2" text-anchor="middle" font-weight="bold" font-size="11" style="letter-spacing:0">DMX</text>
<text class="b" x="983" y="272">DMX</text><text class="b" x="983" y="285">level</text><text class="gr" x="1031" y="272">Universes</text><text class="gr" x="1031" y="285">patch</text>
<rect x="1077" y="227" width="8" height="9" rx="2" fill="#222"/><rect x="1075" y="236" width="12" height="5" fill="#444"/>
<path d="M1073 259l7-4 7 4-2 3h-10z" fill="#c05018"/><rect x="1079" y="251" width="6" height="4" fill="#d06020"/>
<path d="M1074 284l5-11v11z" fill="#e8b020" stroke="#806000" stroke-width=".6"/><rect x="1078" y="272" width="9" height="8" fill="none" stroke="#222080"/><rect x="1075.500" y="274.500" width="9" height="8" fill="none" stroke="#222080"/>
<text class="bl" x="1091" y="238">Add fixture(s)</text><text class="bl" x="1091" y="260">Stage settings...</text><text class="bl" x="1091" y="282">Simple objects editor</text>
<path d="M1226 233L1227 245L1238 243Z" fill="#9aa8b8"/><path d="M1231 240C1238 234 1247 238 1245 245C1244 249 1241 251 1238 252" fill="none" stroke="#9aa8b8" stroke-width="4"/>
<path d="M1288 233L1287 245L1276 243Z" fill="#9aa8b8"/><path d="M1283 240C1276 234 1267 238 1269 245C1270 249 1273 251 1276 252" fill="none" stroke="#9aa8b8" stroke-width="4"/>
<text class="gr" x="1234" y="272">Undo</text><text class="gr" x="1276" y="272">Redo</text>

<rect x="829.500" y="311.500" width="521" height="419" fill="#323232" stroke="#14204a"/>
<path d="M830 312H975L1002 325L1010 543L830 578Z" fill="#393939"/>
<path d="M975 312H1040L1002 325z" fill="#343434"/>
<path d="M830 578L1010 543L1350 575V730H830Z" fill="#353535"/>
<path d="M867 422L869 422L889 608L871 608Z" fill="url(#beam)"/><path d="M867.500 422L868.500 422L879 608L876 608Z" fill="#15a8a8" opacity=".25"/>
<path d="M871 611L887 606L890 608L884 611Z" fill="#08dcdc" stroke="#08dcdc" stroke-dasharray="1 1"/>
<path d="M1288.500 375L1291 375L1298 708L1266 708Z" fill="url(#beam)"/><path d="M1289 375L1290.500 375L1288 706L1275 706Z" fill="#15a8a8" opacity=".2"/>
<ellipse cx="1281" cy="711" rx="15" ry="6" fill="#08dcdc" stroke="#08dcdc" stroke-width="3" stroke-dasharray="1.500 1.500"/>
<path d="M1276 711l8 1" stroke="#1a8a8a"/>
<path d="M852 393q0-2 2-2H878q2 0 2 2v4q0 2-2 2H869l3 5v9l-4 8q-1 2-3 0l-7-6v-11l3-5H854q-2 0-2-2z" fill="#111"/>
<path d="M1265 323L1315 313Q1318 313 1318 318V325Q1318 329 1314 329L1303 332L1310 340L1312 345V362L1304 366L1298 372Q1290 377 1282 372L1270 364V350L1276 336L1266 332Q1264 331 1264 328Z" fill="#111"/>
<path d="M1281 348a12 10 0 0 1 20-3" fill="none" stroke="#333"/>

<rect x="827" y="733" width="153" height="21" fill="url(#st1)"/><rect x="980" y="733" width="1" height="21" fill="#7890b0"/>
<rect x="981" y="733" width="373" height="21" fill="url(#st2)"/>
<text x="987" y="747" fill="#3d5d90" font-weight="bold" font-size="11" textLength="294" lengthAdjust="spacing" xml:space="preserve">Controlled by Sunlite Suite2  |  ECO MODE  |  DMX ON</text>
<circle cx="1297" cy="744" r="6" fill="url(#led)"/>
<path d="M1315 737h12l-1 5-1 8q-3 3-7 2l-2-4z" fill="#333"/><circle cx="1321" cy="742" r="2" fill="#a8a0d0"/>
<g fill="#345"><rect x="1349" y="741" width="2" height="2"/><rect x="1349" y="745" width="2" height="2"/><rect x="1349" y="749" width="2" height="2"/><rect x="1345" y="745" width="2" height="2"/><rect x="1345" y="749" width="2" height="2"/><rect x="1341" y="749" width="2" height="2"/></g>
</svg>
</body></html>
